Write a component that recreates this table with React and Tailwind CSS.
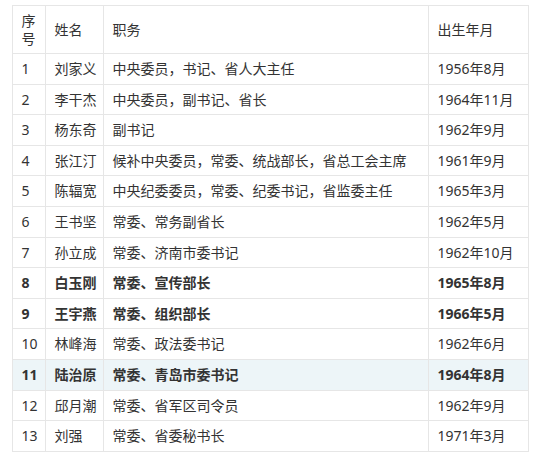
const rows = [
  ["1", "刘家义", "中央委员，书记、省人大主任", "1956年8月"],
  ["2", "李干杰", "中央委员，副书记、省长", "1964年11月"],
  ["3", "杨东奇", "副书记", "1962年9月"],
  ["4", "张江汀", "候补中央委员，常委、统战部长，省总工会主席", "1961年9月"],
  ["5", "陈辐宽", "中央纪委委员，常委、纪委书记，省监委主任", "1965年3月"],
  ["6", "王书坚", "常委、常务副省长", "1962年5月"],
  ["7", "孙立成", "常委、济南市委书记", "1962年10月"],
  ["8", "白玉刚", "常委、宣传部长", "1965年8月", "bold"],
  ["9", "王宇燕", "常委、组织部长", "1966年5月", "bold"],
  ["10", "林峰海", "常委、政法委书记", "1962年6月"],
  ["11", "陆治原", "常委、青岛市委书记", "1964年8月", "bold", "hl"],
  ["12", "邱月潮", "常委、省军区司令员", "1962年9月"],
  ["13", "刘强", "常委、省委秘书长", "1971年3月"],
];

const cell = "border border-[#e6e6e6] px-[8.5px] py-[6.1px] leading-[17.4px] align-middle";

export default function App() {
  return (
    <div
      className="w-[550px] h-[466px] bg-white pt-[5px] pl-[12px] text-[14px] text-[#333]"
      style={{ fontFamily: '"Noto Sans", "Noto Sans CJK SC", sans-serif' }}
    >
      <table className="w-[516px] border-collapse table-fixed">
        <colgroup>
          <col className="w-[33px]" />
          <col className="w-[58px]" />
          <col className="w-[325px]" />
          <col className="w-[100px]" />
        </colgroup>
        <thead>
          <tr>
            <th className={`${cell} font-normal text-left`}>序<br />号</th>
            <th className={`${cell} font-normal text-left`}>姓名</th>
            <th className={`${cell} font-normal text-left`}>职务</th>
            <th className={`${cell} font-normal text-left`}>出生年月</th>
          </tr>
        </thead>
        <tbody>
          {rows.map(([no, name, post, born, bold, hl]) => (
            <tr key={no} className={`${hl ? "bg-[#edf5f8]" : ""} ${bold ? "font-bold" : ""}`}>
              <td className={cell}>{no}</td>
              <td className={`${cell} whitespace-nowrap`}>{name}</td>
              <td className={`${cell} whitespace-nowrap`}>{post}</td>
              <td className={`${cell} whitespace-nowrap`}>{born}</td>
            </tr>
          ))}
        </tbody>
      </table>
    </div>
  );
}
